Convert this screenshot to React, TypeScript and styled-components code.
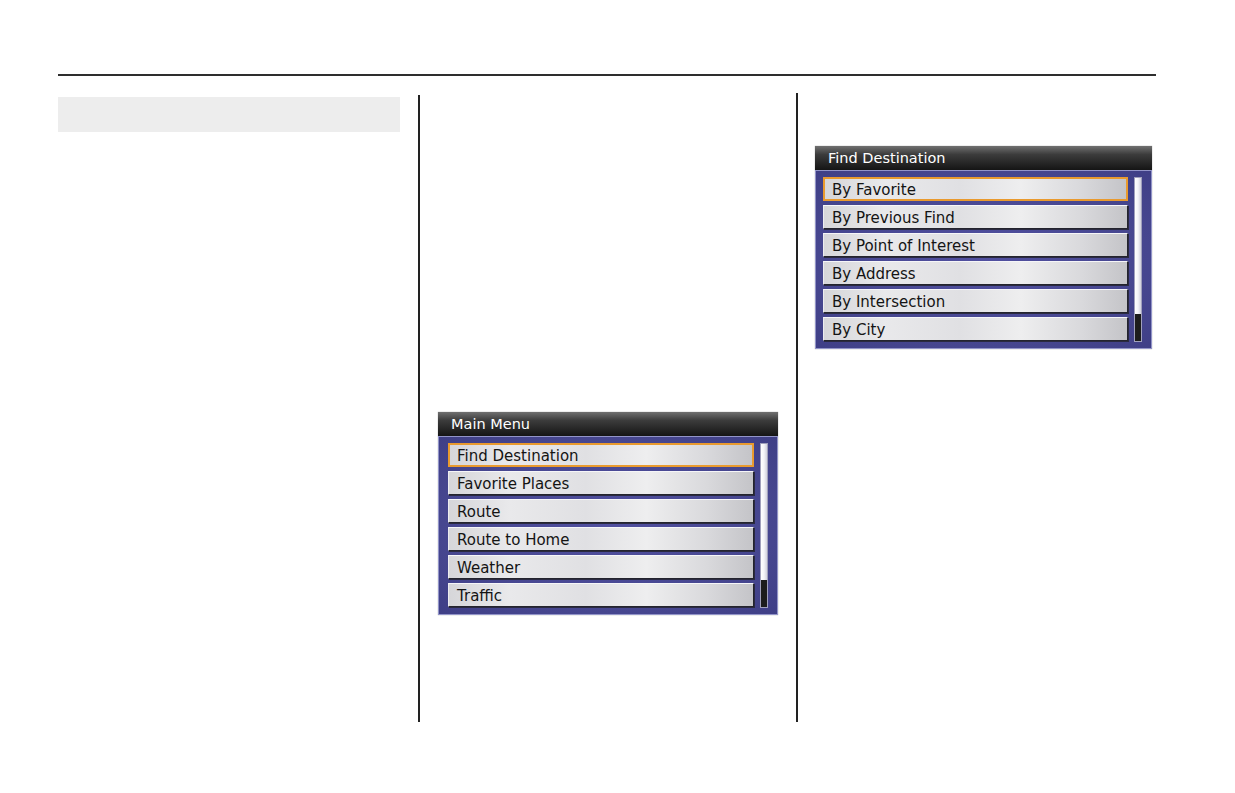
import React from 'react';
import styled, { createGlobalStyle } from 'styled-components';

const GlobalStyle = createGlobalStyle`
  body, html {
    margin: 0;
    padding: 0;
    background: #ffffff;
    width: 1235px;
    height: 793px;
    overflow: hidden;
  }
`;

const Page = styled.div`
  width: 1098px;
  padding: 74px 0 0 58px;
  font-family: 'DejaVu Sans', Verdana, sans-serif;
`;

const TopRule = styled.div`
  height: 2px;
  background: #2e2e2e;
`;

const Columns = styled.div`
  display: flex;
  align-items: flex-start;
`;

const Column = styled.div<{ $width: number; $top: number; $inset: number }>`
  width: ${p => p.$width}px;
  padding-top: ${p => p.$top}px;
  padding-left: ${p => p.$inset}px;
  box-sizing: border-box;
`;

const HeadingBar = styled.div`
  width: 342px;
  height: 35px;
  background: #ededed;
`;

const Divider = styled.div<{ $top: number }>`
  width: 2px;
  margin-top: ${p => p.$top}px;
  height: ${p => 722 - 76 - p.$top}px;
  background: #222;
`;

// navigation screen
const Screen = styled.div<{ $width: number }>`
  width: ${p => p.$width}px;
  height: 203px;
  display: flex;
  flex-direction: column;
  box-shadow: 0 0 1px rgba(0, 0, 0, 0.4);
`;

const TitleBar = styled.div`
  height: 24px;
  line-height: 25px;
  padding-left: 13px;
  color: #fff;
  font-size: 14.5px;
  background: linear-gradient(180deg, #707070 0%, #3c3c3c 35%, #151515 100%);
`;

const Body = styled.div<{ $left: number }>`
  flex: 1;
  display: flex;
  gap: 6px;
  padding: 6px 9px 6px ${p => p.$left - 1}px;
  border: 1px solid #9294c8;
  background: radial-gradient(ellipse at 50% 50%, #5150a0 0%, #46468f 70%, #3f3f86 100%);
`;

const List = styled.div`
  flex: 1;
  display: flex;
  flex-direction: column;
  gap: 4px;
`;

// silver menu button
const Item = styled.div<{ $active?: boolean }>`
  height: 24px;
  box-sizing: border-box;
  overflow: hidden;
  padding-left: ${p => (p.$active ? 7 : 8)}px;
  line-height: ${p => (p.$active ? 23 : 25)}px;
  font-size: 15px;
  color: #141414;
  background: linear-gradient(90deg, #d6d6d9 0%, #e9e9eb 20%, #e0e0e3 45%, #eeeeef 65%, #d9d9dc 85%, #c4c4c8 100%);
  border: ${p => (p.$active ? '2px solid #e99a2e' : '1px solid #24242e')};
  border-top-color: ${p => (p.$active ? '#e99a2e' : '#f6f6f8')};
  border-left-color: ${p => (p.$active ? '#e99a2e' : '#ececef')};
  box-shadow: ${p => (p.$active ? 'none' : '1px 1px 0 #2a2a40')};
`;

const Scroll = styled.div`
  width: 8px;
  display: flex;
  flex-direction: column;
  border: 1px solid #a0a0bc;
  box-sizing: border-box;
  background: linear-gradient(90deg, #ffffff 0%, #f4f4f8 50%, #d0d0dc 100%);
`;

const Thumb = styled.div`
  margin-top: auto;
  height: 27px;
  background: #1c1c1c;
`;

type MenuProps = { title: string; items: string[]; width: number; left: number };

function Menu({ title, items, width, left }: MenuProps) {
  return (
    <Screen $width={width}>
      <TitleBar>{title}</TitleBar>
      <Body $left={left}>
        <List>
          {items.map((item, i) => (
            <Item key={item} $active={i === 0}>{item}</Item>
          ))}
        </List>
        <Scroll>
          <Thumb />
        </Scroll>
      </Body>
    </Screen>
  );
}

const mainItems = ['Find Destination', 'Favorite Places', 'Route', 'Route to Home', 'Weather', 'Traffic'];
const findItems = ['By Favorite', 'By Previous Find', 'By Point of Interest', 'By Address', 'By Intersection', 'By City'];

function App() {
  return (
    <>
      <GlobalStyle />
      <Page>
        <TopRule />
        <Columns>
          <Column $width={360} $top={21} $inset={0}>
            <HeadingBar />
          </Column>
          <Divider $top={19} />
          <Column $width={376} $top={336} $inset={18}>
            <Menu title="Main Menu" items={mainItems} width={340} left={10} />
          </Column>
          <Divider $top={17} />
          <Column $width={358} $top={70} $inset={17}>
            <Menu title="Find Destination" items={findItems} width={337} left={8} />
          </Column>
        </Columns>
      </Page>
    </>
  );
}

export default App;
